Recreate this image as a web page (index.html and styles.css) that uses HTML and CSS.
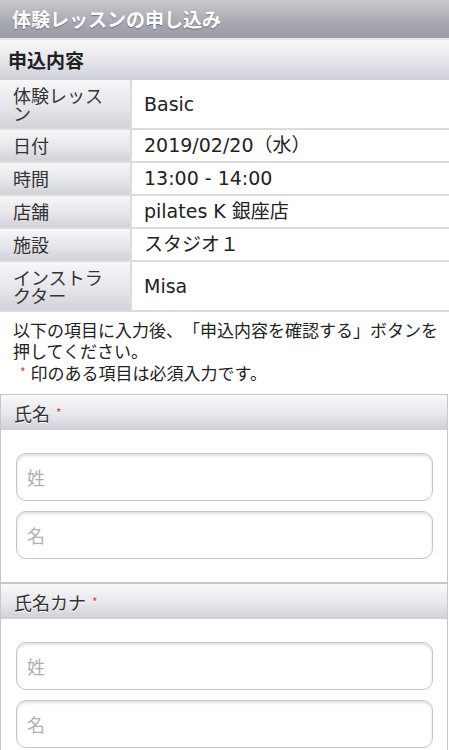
FILE: index.html
```html
<!DOCTYPE html>
<html lang="ja">
<head>
<meta charset="utf-8">
<title>体験レッスンの申し込み</title>
<link rel="stylesheet" href="styles.css">
</head>
<body>
<header class="titlebar">体験レッスンの申し込み</header>
<h2 class="section-title">申込内容</h2>
<div class="info">
  <div class="row"><div class="label">体験レッスン</div><div class="value">Basic</div></div>
  <div class="row"><div class="label">日付</div><div class="value">2019/02/20（水）</div></div>
  <div class="row"><div class="label">時間</div><div class="value">13:00 - 14:00</div></div>
  <div class="row"><div class="label">店舗</div><div class="value">pilates K 銀座店</div></div>
  <div class="row"><div class="label">施設</div><div class="value">スタジオ１</div></div>
  <div class="row"><div class="label">インストラクター</div><div class="value">Misa</div></div>
</div>
<div class="notice">
  <p>以下の項目に入力後、「申込内容を確認する」ボタンを押してください。</p>
  <p class="req-note"><span class="req">*</span>印のある項目は必須入力です。</p>
</div>
<section class="field">
  <div class="field-head">氏名<span class="req">*</span></div>
  <div class="field-body">
    <input class="text-input" type="text" placeholder="姓">
    <input class="text-input" type="text" placeholder="名">
  </div>
</section>
<section class="field">
  <div class="field-head">氏名カナ<span class="req">*</span></div>
  <div class="field-body">
    <input class="text-input" type="text" placeholder="姓">
    <input class="text-input" type="text" placeholder="名">
  </div>
</section>
</body>
</html>
```
FILE: styles.css
```css
html, body {
  margin: 0;
  padding: 0;
  background: #ffffff;
}
body {
  width: 449px;
  font-family: "Noto Sans CJK JP", "Noto Sans", sans-serif;
  color: #222;
  text-spacing-trim: space-all;
}
.titlebar {
  height: 38px;
  line-height: 38px;
  padding-left: 12px;
  font-size: 19px;
  font-weight: bold;
  color: #ffffff;
  text-shadow: 0 1px 1px rgba(0, 0, 0, 0.35);
  background: linear-gradient(to bottom, #c9c9cd 0%, #a8a8b2 60%, #9b9ba8 100%);
  border-bottom: 2px solid #e4e4e8;
}
.section-title {
  margin: 0;
  height: 40px;
  line-height: 40px;
  padding-left: 8px;
  font-size: 19px;
  font-weight: bold;
  color: #222;
  background: linear-gradient(to bottom, #f8f8fa 0%, #e4e4ea 55%, #d0d0d8 100%);
}
.row {
  display: grid;
  grid-template-columns: 132px 1fr;
  border-bottom: 2px solid #dcdcdc;
}
.label {
  padding: 6px 16px 6px 13px;
  font-size: 18px;
  line-height: 18px;
  color: #333;
  border-right: 2px solid #dcdcdc;
  background: linear-gradient(to bottom, #f7f7f9 0%, #e6e6eb 55%, #d2d2da 100%);
}
.value {
  display: flex;
  align-items: center;
  padding: 6px 12px;
  font-family: "DejaVu Sans", "Noto Sans CJK JP", sans-serif;
  font-size: 19px;
  line-height: 19px;
  color: #222;
}
.notice {
  padding: 7px 8px 11px 13px;
  font-size: 17px;
  line-height: 21px;
  color: #222;
}
.notice p {
  margin: 0;
}
.req-note {
  padding-left: 4px;
}
.req {
  color: #e23a3a;
  font-size: 12px;
  vertical-align: 3px;
  margin: 0 5px 0 3px;
}
.field {
  border: 1px solid #c8c8c8;
  margin-right: 1px;
}
.field-head {
  height: 35px;
  line-height: 35px;
  padding-left: 13px;
  font-size: 18px;
  color: #333;
  text-shadow: 0 1px 0 #ffffff;
  background: linear-gradient(to bottom, #f9f9fb 0%, #e7e7ec 55%, #cfcfd8 100%);
}
.field-head .req {
  margin-left: 6px;
}
.field-body {
  display: flex;
  flex-direction: column;
  gap: 10px;
  padding: 23px 14px 23px 15px;
  background: #ffffff;
}
.text-input {
  display: block;
  width: 100%;
  box-sizing: border-box;
  height: 48px;
  margin: 0;
  padding: 0 10px;
  font-family: "Noto Sans CJK JP", sans-serif;
  font-size: 18px;
  color: #222;
  background: #ffffff;
  border: 1px solid #c6c6c6;
  border-radius: 10px;
  box-shadow: inset 0 2px 3px rgba(0, 0, 0, 0.12);
  outline: none;
}
.text-input::placeholder {
  color: #b0b0b0;
}
```
